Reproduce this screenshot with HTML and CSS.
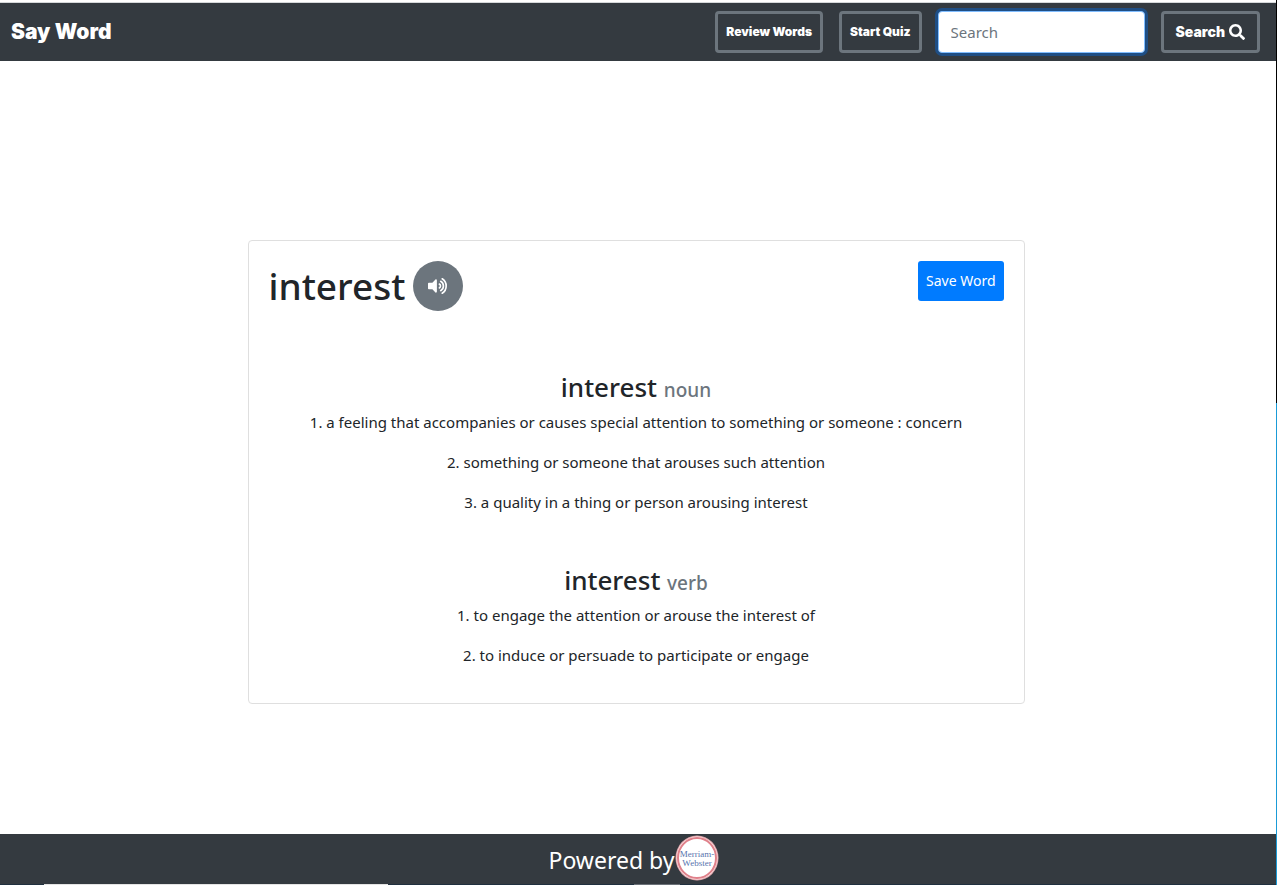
FILE: index.html
```
<!DOCTYPE html>
<html lang="en">
<head>
<meta charset="utf-8">
<meta name="viewport" content="width=device-width, initial-scale=1">
<title>Say Word</title>
<link rel="stylesheet" href="styles.css">
</head>
<body>
<div class="page">
  <header class="navbar">
    <a class="brand" href="#">Say Word</a>
    <form class="nav-form">
      <button class="nav-button" type="button">Review Words</button>
      <button class="nav-button" type="button">Start Quiz</button>
      <input class="search-input" type="text" placeholder="Search" aria-label="Search" autofocus>
      <button class="nav-button nav-button-large" type="submit">Search
        <svg class="search-icon" viewBox="0 0 512 512" aria-hidden="true"><path fill="currentColor" d="M505 442.700L405.300 343c-4.500-4.500-10.600-7-17-7H372c27.600-35.300 44-79.700 44-128C416 93.100 322.900 0 208 0S0 93.100 0 208s93.100 208 208 208c48.300 0 92.700-16.400 128-44v16.300c0 6.400 2.500 12.500 7 17l99.700 99.700c9.400 9.400 24.600 9.400 33.900 0l28.300-28.300c9.400-9.400 9.400-24.600.1-34zM208 336c-70.700 0-128-57.200-128-128 0-70.700 57.200-128 128-128 70.700 0 128 57.200 128 128 0 70.700-57.200 128-128 128z"/></svg>
      </button>
    </form>
  </header>

  <main class="content">
    <article class="card">
      <div class="card-head">
        <h1 class="word">interest</h1>
        <button class="sound-button" type="button" aria-label="Play pronunciation">
          <svg class="sound-icon" viewBox="0 0 576 512" aria-hidden="true"><path fill="currentColor" d="M215 71L126 160H24c-13.300 0-24 10.700-24 24v144c0 13.300 10.700 24 24 24h102l89 89c15 15 41 4.500 41-17V88c0-21.500-26-32-41-17z"/><g fill="none" stroke="currentColor" stroke-width="48" stroke-linecap="round"><path d="M327 200a64 64 0 0 1 0 112"/><path d="M366 122a154 154 0 0 1 0 268"/><path d="M410 48a248 248 0 0 1 0 416"/></g></svg>
        </button>
        <button class="save-button" type="button">Save Word</button>
      </div>
      <section class="entry">
        <h2 class="entry-title">interest <small class="part">noun</small></h2>
        <p class="definition">1. a feeling that accompanies or causes special attention to something or someone : concern</p>
        <p class="definition">2. something or someone that arouses such attention</p>
        <p class="definition">3. a quality in a thing or person arousing interest</p>
      </section>
      <section class="entry">
        <h2 class="entry-title">interest <small class="part">verb</small></h2>
        <p class="definition">1. to engage the attention or arouse the interest of</p>
        <p class="definition">2. to induce or persuade to participate or engage</p>
      </section>
    </article>
  </main>

  <footer class="footer">
    <span>Powered by</span>
    <svg class="logo" viewBox="0 0 44 46" role="img" aria-label="Merriam-Webster">
      <ellipse cx="22" cy="23" rx="21.500" ry="22.500" fill="#e3a7ad"/>
      <ellipse cx="22" cy="23" rx="20.500" ry="21.500" fill="#fbeeee"/>
      <ellipse cx="22" cy="23" rx="19" ry="20" fill="#fff" stroke="#e0808a" stroke-width="2"/>
      <text class="logo-text" x="22" y="22" text-anchor="middle">Merriam-</text>
      <text class="logo-text" x="22" y="31" text-anchor="middle">Webster</text>
    </svg>
  </footer>
</div>
</body>
</html>
```
FILE: styles.css
```
* {
  box-sizing: border-box;
}

body {
  margin: 0;
  background: #fff;
  color: #212529;
  font: 15px/24px "Noto Sans", "Open Sans", sans-serif;
}

.page {
  display: flex;
  flex-direction: column;
  min-height: 100vh;
  padding-top: 2px;
  border-right: 1px solid;
  border-image: linear-gradient(#000 403px, #1a9bd7 403px) 1;
}

.navbar {
  display: flex;
  align-items: center;
  justify-content: space-between;
  padding: 8px 16px 8px 11px;
  border-top: 1px solid #d5d8da;
  background: #343a40;
}

.brand {
  color: #fff;
  font: 900 21px/32px Inter, sans-serif;
  text-decoration: none;
}

.nav-form {
  display: flex;
  align-items: center;
  gap: 16px;
}

.nav-button {
  height: 42px;
  padding: 0 8px;
  border: 3px solid #6c757d;
  border-radius: 4px;
  background: transparent;
  color: #fff;
  font: 900 12px/20px Inter, sans-serif;
}

.nav-button-large {
  display: flex;
  align-items: center;
  gap: 4px;
  padding: 0 12px;
  font-size: 14px;
}

.search-icon {
  width: 16px;
  height: 16px;
}

.search-input {
  width: 207px;
  height: 42px;
  padding: 0 12px;
  border: 1px solid #80bdff;
  border-radius: 4px;
  outline: none;
  background: #fff;
  box-shadow: 0 0 0 3px #1f4e84;
  color: #495057;
  font: 15px/24px "Noto Sans", sans-serif;
}

.search-input::placeholder {
  color: #6c757d;
  opacity: 1;
}

.content {
  display: flex;
  flex: 1;
  align-items: center;
  justify-content: center;
  padding: 48px 20px 0 16px;
}

.card {
  width: 100%;
  max-width: 777px;
  padding: 20px;
  border: 1px solid #dfdfdf;
  border-radius: 4px;
}

.card-head {
  display: flex;
  align-items: flex-start;
  gap: 8px;
  margin-bottom: 59px;
}

.word {
  margin: 0;
  font-size: 37px;
  font-weight: 500;
  line-height: 50px;
}

.sound-button {
  display: flex;
  align-items: center;
  justify-content: center;
  width: 50px;
  height: 50px;
  padding: 0;
  border: 0;
  border-radius: 50%;
  background: #6c757d;
  color: #fff;
}

.sound-icon {
  width: 20px;
  height: 18px;
}

.save-button {
  height: 40px;
  margin-left: auto;
  padding: 0 8px;
  border: 0;
  border-radius: 3px;
  background: #007bff;
  color: #fff;
  font: 14px/20px "Noto Sans", sans-serif;
}

.entry {
  text-align: center;
}

.entry + .entry {
  margin-top: 49px;
}

.entry-title {
  margin: 0 0 3px;
  font-size: 26px;
  font-weight: 500;
  line-height: 34px;
}

.part {
  color: #6c757d;
  font-size: 19px;
}

.definition {
  margin: 0 0 16px;
}

.footer {
  display: flex;
  align-items: flex-start;
  justify-content: center;
  gap: 1px;
  height: 51px;
  padding: 1px 8px 0 0;
  background:
    linear-gradient(90deg, transparent 44px, #e4e4e4 44px, #e4e4e4 388px, transparent 388px, transparent 634px, #6b7178 634px, #6b7178 680px, transparent 680px) bottom / 100% 1px no-repeat,
    linear-gradient(#20303f, #20303f) bottom / 100% 1px no-repeat,
    #343a40;
  color: #fff;
  font-size: 23px;
  line-height: 50px;
}

.logo {
  width: 44px;
  height: 46px;
}

.logo-text {
  fill: #5874ad;
  font: 9px "Liberation Serif", serif;
}
```
